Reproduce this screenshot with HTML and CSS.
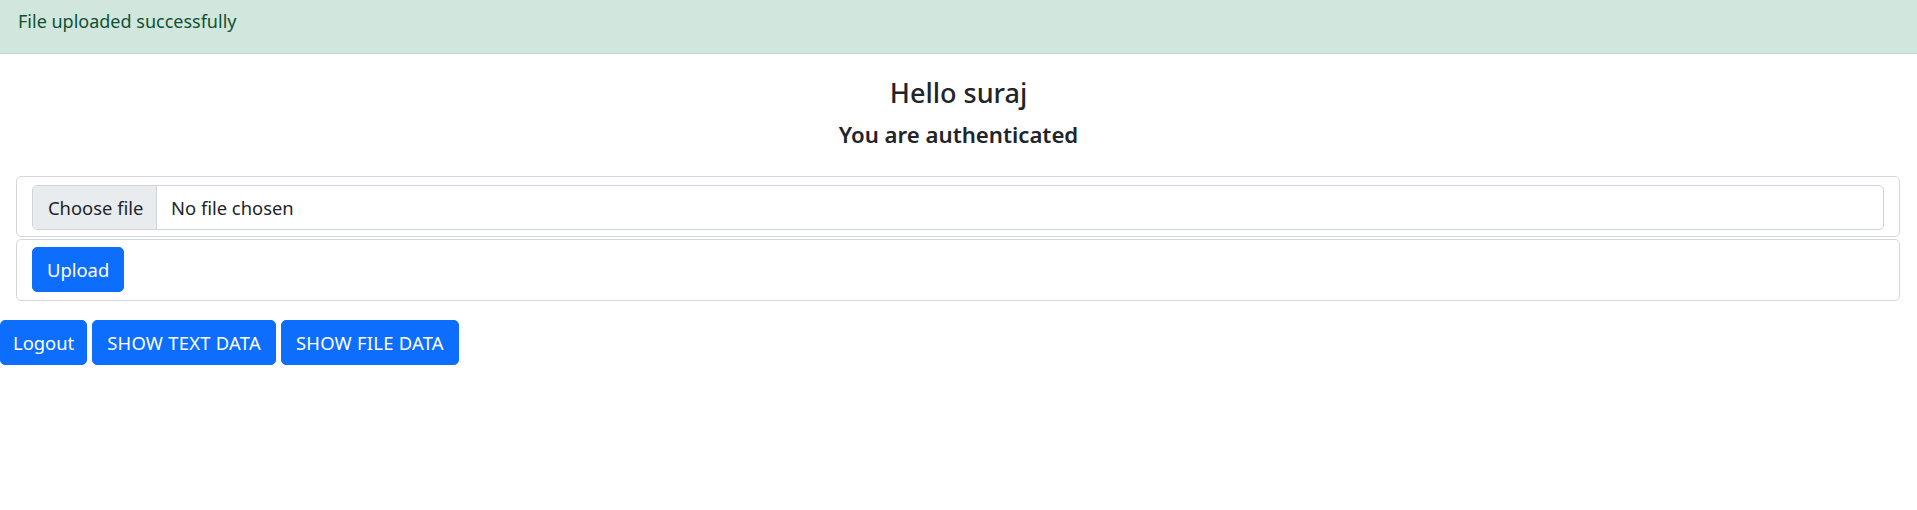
FILE: index.html
```html
<!DOCTYPE html>
<html lang="en">
<head>
<meta charset="utf-8">
<title>Upload</title>
<link rel="stylesheet" href="styles.css">
</head>
<body>
<div class="alert">File uploaded successfully</div>
<div class="greeting">
  <h4 class="title">Hello suraj</h4>
  <h5 class="subtitle">You are authenticated</h5>
</div>
<form class="upload-form">
  <div class="box box-file">
    <label class="file-input">
      <span class="file-btn">Choose file</span>
      <span class="file-name">No file chosen</span>
    </label>
  </div>
  <div class="box box-submit">
    <button type="button" class="btn">Upload</button>
  </div>
</form>
<div class="actions">
  <button type="button" class="btn btn-logout">Logout</button>
  <button type="button" class="btn btn-caps">SHOW TEXT DATA</button>
  <button type="button" class="btn btn-caps">SHOW FILE DATA</button>
</div>
</body>
</html>
```
FILE: styles.css
```css
html, body {
  margin: 0;
  padding: 0;
  background: #fff;
}
body {
  font-family: "Noto Sans", "Open Sans", sans-serif;
  font-size: 18.4px;
  color: #212529;
  width: 1917px;
}
.alert {
  background: #d1e7dd;
  color: #0f5132;
  border-bottom: 1px solid #badbcc;
  padding: 7px 18px 18px;
  line-height: 28px;
  font-size: 18px;
}
.greeting {
  text-align: center;
  padding-top: 22px;
}
.title {
  margin: 0;
  font-size: 27px;
  font-weight: 500;
  line-height: 33px;
}
.subtitle {
  margin: 12px 0 0;
  font-size: 22.2px;
  font-weight: 600;
  line-height: 28px;
}
.upload-form {
  margin: 27px 17px 0 16px;
}
.box {
  border: 1px solid #d3d7dc;
  border-radius: 5px;
}
.box-file {
  padding: 8px 15px 6px;
}
.box-submit {
  margin-top: 2px;
  padding: 7px 15px 8px;
}
.file-input {
  display: flex;
  height: 43px;
  border: 1px solid #ced4da;
  border-radius: 5px;
  overflow: hidden;
  line-height: 43px;
}
.file-btn {
  background: #e9ecef;
  border-right: 1px solid #ced4da;
  padding: 0 15px 0 15px;
  width: 93px;
  white-space: nowrap;
}
.file-name {
  padding-left: 14px;
}
.btn {
  font-family: inherit;
  font-size: 18.4px;
  color: #fff;
  background: #0d6efd;
  border: 1px solid #0d6efd;
  border-radius: 5px;
  height: 45px;
  padding: 0 14px;
  line-height: 43px;
  cursor: pointer;
}
.btn-logout {
  padding: 0 12px;
}
.btn-caps {
  letter-spacing: 0.25px;
}
.actions {
  margin-top: 19px;
  display: flex;
  gap: 5px;
}
```
